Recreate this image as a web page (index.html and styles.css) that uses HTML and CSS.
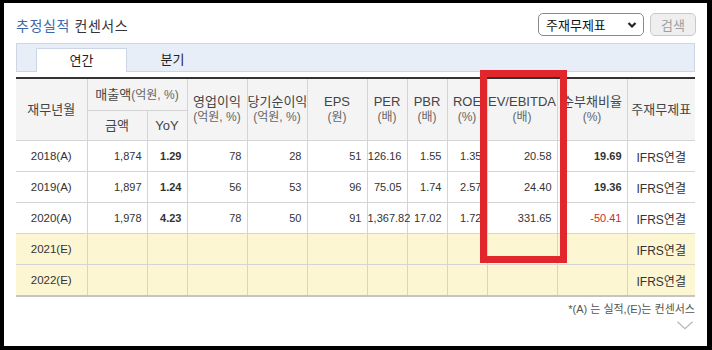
FILE: index.html
```html
<!DOCTYPE html>
<html lang="ko">
<head>
<meta charset="utf-8">
<title>추정실적 컨센서스</title>
<link rel="stylesheet" href="styles.css">
</head>
<body>
<div class="page">
  <div class="top">
    <h2 class="title"><span class="blue">추정실적</span> 컨센서스</h2>
    <div class="controls">
      <div class="select">주재무제표
        <svg class="caret" width="10" height="8" viewBox="0 0 10 8"><path d="M1.5 2 L5 5.5 L8.5 2" fill="none" stroke="#222" stroke-width="2.2"/></svg>
      </div>
      <button class="btn">검색</button>
    </div>
  </div>
  <div class="tabs">
    <div class="tab active">연간</div>
    <div class="tab">분기</div>
  </div>
  <table class="grid">
    <colgroup>
      <col class="c71"><col class="c60"><col class="c40"><col class="c60"><col class="c60"><col class="c60"><col class="c40"><col class="c40"><col class="c40"><col class="c70"><col class="c70"><col class="c68">
    </colgroup>
    <thead>
      <tr class="h1">
        <th rowspan="2">재무년월</th>
        <th colspan="2">매출액<span class="unit">(억원, %)</span></th>
        <th rowspan="2">영업이익<br><span class="unit">(억원, %)</span></th>
        <th rowspan="2">당기순이익<br><span class="unit">(억원, %)</span></th>
        <th rowspan="2">EPS<br><span class="unit">(원)</span></th>
        <th rowspan="2">PER<br><span class="unit">(배)</span></th>
        <th rowspan="2">PBR<br><span class="unit">(배)</span></th>
        <th rowspan="2">ROE<br><span class="unit">(%)</span></th>
        <th rowspan="2">EV/EBITDA<br><span class="unit">(배)</span></th>
        <th rowspan="2">순부채비율<br><span class="unit">(%)</span></th>
        <th rowspan="2">주재무제표</th>
      </tr>
      <tr class="h2">
        <th>금액</th>
        <th>YoY</th>
      </tr>
    </thead>
    <tbody>
      <tr>
        <td class="ctr">2018(A)</td><td>1,874</td><td class="b">1.29</td><td>78</td><td>28</td><td>51</td><td>126.16</td><td>1.55</td><td>1.35</td><td>20.58</td><td class="b">19.69</td><td class="ctr">IFRS연결</td>
      </tr>
      <tr>
        <td class="ctr">2019(A)</td><td>1,897</td><td class="b">1.24</td><td>56</td><td>53</td><td>96</td><td>75.05</td><td>1.74</td><td>2.57</td><td>24.40</td><td class="b">19.36</td><td class="ctr">IFRS연결</td>
      </tr>
      <tr>
        <td class="ctr">2020(A)</td><td>1,978</td><td class="b">4.23</td><td>78</td><td>50</td><td>91</td><td>1,367.82</td><td>17.02</td><td>1.72</td><td>331.65</td><td class="neg">-50.41</td><td class="ctr">IFRS연결</td>
      </tr>
      <tr class="est">
        <td class="ctr">2021(E)</td><td></td><td></td><td></td><td></td><td></td><td></td><td></td><td></td><td></td><td></td><td class="ctr">IFRS연결</td>
      </tr>
      <tr class="est last">
        <td class="ctr">2022(E)</td><td></td><td></td><td></td><td></td><td></td><td></td><td></td><td></td><td></td><td></td><td class="ctr">IFRS연결</td>
      </tr>
    </tbody>
  </table>
  <div class="note">*(A) 는 실적,(E)는 컨센서스</div>
  <div class="more">
    <svg width="16" height="9" viewBox="0 0 16 9"><path d="M0.5 0.8 L8 7.8 L15.5 0.8" fill="none" stroke="#b5b5b5" stroke-width="1.2"/></svg>
  </div>
  <div class="redbox"></div>
</div>
</body>
</html>
```

FILE: styles.css
```css
html, body {
  margin: 0;
  padding: 0;
  background: #000;
}
body {
  width: 712px;
  height: 350px;
  overflow: hidden;
  font-family: "Liberation Sans", "Noto Sans CJK KR", sans-serif;
  color: #333;
}
.page {
  position: relative;
  margin: 3px 5px 0 4px;
  height: 343px;
  background: #fff;
  padding: 0 12px;
  box-sizing: border-box;
}
.top {
  height: 40px;
  display: flex;
  justify-content: space-between;
  align-items: flex-start;
  padding-top: 10px;
  box-sizing: border-box;
}
.title {
  margin: 2px 0 0 0;
  font-size: 14px;
  font-weight: normal;
  line-height: 23px;
  color: #333;
  letter-spacing: 0.6px;
}
.blue { color: #3a68a8; }
.controls {
  display: flex;
  gap: 6px;
  margin-right: -1px;
}
.select {
  width: 106px;
  height: 23px;
  box-sizing: border-box;
  border: 1px solid #8a8a8a;
  border-radius: 5px;
  display: flex;
  align-items: center;
  justify-content: space-between;
  padding: 0 6px 0 7px;
  font-size: 13px;
  color: #111;
}
.btn {
  width: 46px;
  height: 23px;
  box-sizing: border-box;
  border: 1px solid #c9c9c9;
  border-radius: 5px;
  background: #efefef;
  color: #a0a0a0;
  font-family: "Liberation Sans", "Noto Sans CJK KR", sans-serif;
  font-size: 13px;
  padding: 0;
}
.tabs {
  height: 29px;
  box-sizing: border-box;
  border: 1px solid #cdd6e4;
  background: #e8eef8;
  display: flex;
  align-items: flex-end;
  padding-left: 19px;
}
.tab {
  width: 91px;
  height: 24px;
  box-sizing: border-box;
  text-align: center;
  font-size: 13px;
  line-height: 23px;
  color: #222;
  margin-bottom: -1px;
}
.tab.active {
  background: #fff;
  border: 1px solid #cdd6e4;
  border-bottom: none;
  height: 24px;
}
.grid {
  margin-top: 5px;
  width: 679px;
  border-collapse: collapse;
  table-layout: fixed;
  border-top: 2px solid #333;
  border-bottom: 2px solid #c4c4c4;
}
.c71 { width: 71px; }
.c60 { width: 60px; }
.c40 { width: 40px; }
.c70 { width: 70px; }
.c68 { width: 68px; }
.grid th {
  background: #f4f4f4;
  border: 1px solid #d4d4d4;
  font-weight: normal;
  font-size: 13px;
  color: #444;
  padding: 0;
  line-height: 15px;
  text-align: center;
  white-space: nowrap;
}
.grid th:first-child, .grid td:first-child { border-left: none; }
.grid th:last-child, .grid td:last-child { border-right: none; }
.grid tr.h1 th { height: 31px; }
.grid tr.h2 th { height: 29px; }
.grid tr.h2 th:first-child { border-left: 1px solid #d4d4d4; }
.unit {
  font-size: 12px;
  color: #666;
}
.grid td {
  border: 1px solid #d4d4d4;
  height: 30px;
  padding: 0 5px 0 0;
  font-size: 11px;
  color: #333;
  text-align: right;
  white-space: nowrap;
}
.grid td.ctr {
  text-align: center;
  padding: 0;
  font-size: 12px;
}
.grid td:first-child { font-size: 11.5px; }
.grid td.b { font-weight: bold; }
.grid td.neg { color: #cc2a2a; }
.grid tr.est td { background: #fdf6d2; }
.note {
  text-align: right;
  font-size: 11px;
  color: #555;
  margin-top: 5px;
  line-height: 14px;
}
.more {
  display: flex;
  justify-content: flex-end;
  padding: 5px 2px 0 0;
}
.redbox {
  position: absolute;
  left: 476px;
  top: 67px;
  width: 87px;
  height: 193px;
  box-sizing: border-box;
  border: 7px solid #e1262c;
  pointer-events: none;
}
```
